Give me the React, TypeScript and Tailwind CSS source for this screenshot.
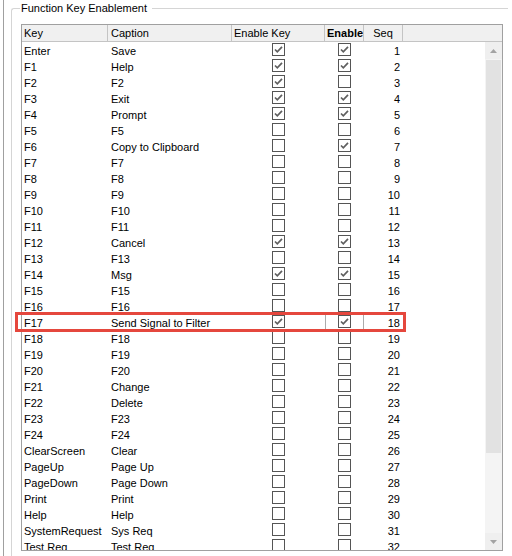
import React from 'react';

type Row = { key: string; caption: string; enableKey: boolean; enable: boolean };

const rows: Row[] = [
  { key: 'Enter', caption: 'Save', enableKey: true, enable: true },
  { key: 'F1', caption: 'Help', enableKey: true, enable: true },
  { key: 'F2', caption: 'F2', enableKey: true, enable: false },
  { key: 'F3', caption: 'Exit', enableKey: true, enable: true },
  { key: 'F4', caption: 'Prompt', enableKey: true, enable: true },
  { key: 'F5', caption: 'F5', enableKey: false, enable: false },
  { key: 'F6', caption: 'Copy to Clipboard', enableKey: false, enable: true },
  { key: 'F7', caption: 'F7', enableKey: false, enable: false },
  { key: 'F8', caption: 'F8', enableKey: false, enable: false },
  { key: 'F9', caption: 'F9', enableKey: false, enable: false },
  { key: 'F10', caption: 'F10', enableKey: false, enable: false },
  { key: 'F11', caption: 'F11', enableKey: false, enable: false },
  { key: 'F12', caption: 'Cancel', enableKey: true, enable: true },
  { key: 'F13', caption: 'F13', enableKey: false, enable: false },
  { key: 'F14', caption: 'Msg', enableKey: true, enable: true },
  { key: 'F15', caption: 'F15', enableKey: false, enable: false },
  { key: 'F16', caption: 'F16', enableKey: false, enable: false },
  { key: 'F17', caption: 'Send Signal to Filter', enableKey: true, enable: true },
  { key: 'F18', caption: 'F18', enableKey: false, enable: false },
  { key: 'F19', caption: 'F19', enableKey: false, enable: false },
  { key: 'F20', caption: 'F20', enableKey: false, enable: false },
  { key: 'F21', caption: 'Change', enableKey: false, enable: false },
  { key: 'F22', caption: 'Delete', enableKey: false, enable: false },
  { key: 'F23', caption: 'F23', enableKey: false, enable: false },
  { key: 'F24', caption: 'F24', enableKey: false, enable: false },
  { key: 'ClearScreen', caption: 'Clear', enableKey: false, enable: false },
  { key: 'PageUp', caption: 'Page Up', enableKey: false, enable: false },
  { key: 'PageDown', caption: 'Page Down', enableKey: false, enable: false },
  { key: 'Print', caption: 'Print', enableKey: false, enable: false },
  { key: 'Help', caption: 'Help', enableKey: false, enable: false },
  { key: 'SystemRequest', caption: 'Sys Req', enableKey: false, enable: false },
  { key: 'Test Req', caption: 'Test Req', enableKey: false, enable: false },
];

function CheckBox({ checked }: { checked: boolean }) {
  return (
    <svg width="13" height="13" viewBox="0 0 13 13" className="block">
      <rect x="0.5" y="0.5" width="12" height="12" fill="#ffffff" stroke="#555555" />
      {checked && (
        <path d="M3 6.5 L5.3 8.8 L10 3.8" fill="none" stroke="#5f5f5f" strokeWidth="1.7" />
      )}
    </svg>
  );
}

function Arrow({ up }: { up: boolean }) {
  return (
    <svg width="7" height="4" viewBox="0 0 7 4" className="block">
      <polygon points={up ? '0,4 3.5,0 7,4' : '0,0 3.5,4 7,0'} fill="#a3a3a3" />
    </svg>
  );
}

export default function App() {
  return (
    <div className="w-[512px] h-[556px] bg-white overflow-hidden flex font-['Liberation_Sans',Arial,sans-serif] text-[11px] text-black">
      {/* Outer frame line */}
      <div className="ml-[3px] h-full border-l border-[#a0a0a0]" />

      {/* Group box */}
      <div className="relative ml-[7px] mt-[8px] w-[497px] h-[560px] border-t border-l border-[#d5d5d5] rounded-tl-[3px] pl-[9px] pt-[15px]">
        <span className="absolute -top-[8px] left-[8px] bg-white pl-[1px] pr-[5px] leading-[15px] whitespace-nowrap">
          Function Key Enablement
        </span>

        {/* Grid */}
        <div className="w-[482px] h-[527px] border border-[#a0a0a0] flex flex-col">
          <div className="h-[17px] flex border-b border-[#c4c4c4] bg-[#f0f0f0] leading-[17px] whitespace-nowrap">
            <div className="w-[86px] border-r border-[#c4c4c4] pl-[2px]">Key</div>
            <div className="w-[124px] border-r border-[#c4c4c4] pl-[3px]">Caption</div>
            <div className="w-[93px] border-r border-[#c4c4c4] pl-[2px]">Enable Key</div>
            <div className="w-[39px] border-r border-[#c4c4c4] pl-[2px] font-bold overflow-hidden">Enable</div>
            <div className="w-[39px] border-r border-[#c4c4c4] text-center">Seq</div>
            <div className="flex-1" />
          </div>

          <div className="flex-1 flex overflow-hidden">
            <div className="flex-1 flex flex-col">
              {rows.map((r, i) => (
                <div key={r.key} className="h-[16px] shrink-0 flex leading-[18px] whitespace-nowrap">
                  <div className="w-[86px] pl-[2px]">{r.key}</div>
                  <div className="w-[124px] pl-[3px]">{r.caption}</div>
                  <div className="w-[93px] flex justify-center pt-[1px]">
                    <CheckBox checked={r.enableKey} />
                  </div>
                  <div
                    className={
                      r.key === 'F17'
                        ? 'w-[39px] flex justify-center pt-[1px] shadow-[inset_0_0_0_1px_#ababab]'
                        : 'w-[39px] flex justify-center pt-[1px]'
                    }
                  >
                    <CheckBox checked={r.enable} />
                  </div>
                  <div className="w-[39px] text-right pr-[3px]">{i + 1}</div>
                </div>
              ))}
            </div>

            {/* Scrollbar */}
            <div className="w-[17px] bg-[#f4f4f4] flex flex-col">
              <div className="h-[17px] bg-[#efefef] flex items-center justify-center">
                <Arrow up />
              </div>
              <div className="mt-[1px] mx-[1px] h-[393px] bg-[#e2e2e2]" />
              <div className="flex-1" />
              <div className="h-[17px] bg-[#efefef] flex items-center justify-center">
                <Arrow up={false} />
              </div>
            </div>
          </div>
        </div>

        {/* Highlight annotation */}
        <div className="absolute left-[3px] top-[303px] w-[391px] h-[20px] border-[3px] border-[#e5473d]" />
      </div>
    </div>
  );
}
